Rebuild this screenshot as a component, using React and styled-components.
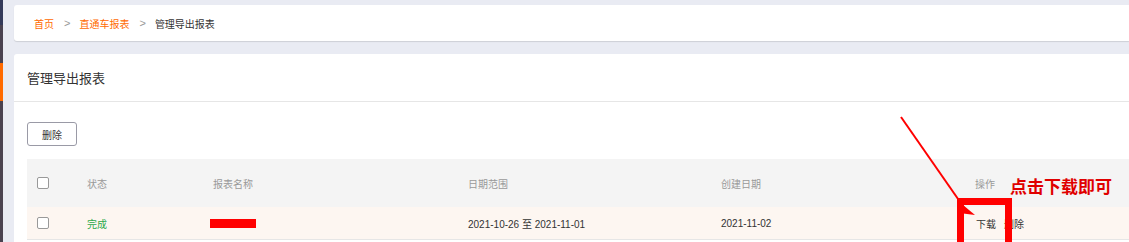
import React from 'react';
import styled, { createGlobalStyle } from 'styled-components';

const GlobalStyle = createGlobalStyle`
  html, body {
    margin: 0;
    padding: 0;
    background: #e9ebf3;
    font-family: "Liberation Sans", "Noto Sans CJK SC", sans-serif;
    overflow: hidden;
  }
`;

const rows = [
  { status: '完成', range: '2021-10-26 至 2021-11-01', created: '2021-11-02' },
];

const App = () => (
  <>
    <GlobalStyle />
    <Page>
      <SideStrip>
        <SideTop />
        <SideActive />
      </SideStrip>
      <Content>
        <Breadcrumb>
          <Crumb $link>首页</Crumb>
          <Sep>&gt;</Sep>
          <Crumb $link>直通车报表</Crumb>
          <Sep>&gt;</Sep>
          <Crumb>管理导出报表</Crumb>
        </Breadcrumb>
        <Card>
          <CardTitle>管理导出报表</CardTitle>
          <CardBody>
            <GhostButton>删除</GhostButton>
            <Table>
              <HeadRow>
                <Cell $first><Check /></Cell>
                <Cell>状态</Cell>
                <Cell>报表名称</Cell>
                <Cell>日期范围</Cell>
                <Cell>创建日期</Cell>
                <Cell>操作</Cell>
              </HeadRow>
              {rows.map((r) => (
                <BodyRow key={r.created}>
                  <Cell $first><Check /></Cell>
                  <Cell><Done>{r.status}</Done></Cell>
                  <Cell><Redacted /></Cell>
                  <Cell>{r.range}</Cell>
                  <Cell>{r.created}</Cell>
                  <Cell>
                    <Action>下载</Action>
                    <Action>删除</Action>
                  </Cell>
                </BodyRow>
              ))}
            </Table>
          </CardBody>
        </Card>
      </Content>
      <Arrow width="90" height="110" viewBox="0 0 90 110">
        <line x1="2" y1="2" x2="66" y2="94" stroke="#ff0000" strokeWidth="2" />
        <polygon points="76,100 64,90 60,98" fill="#ff0000" />
      </Arrow>
      <HighlightBox />
      <Note>点击下载即可</Note>
    </Page>
  </>
);

export default App;

const Page = styled.div`
  position: relative;
  display: flex;
  width: 1129px;
  height: 242px;
  overflow: hidden;
`;

const SideStrip = styled.div`
  width: 3px;
  flex-shrink: 0;
  background: #4a4250;
  display: flex;
  flex-direction: column;
`;

const SideTop = styled.div`
  height: 25px;
  background: #343a5a;
`;

const SideActive = styled.div`
  margin-top: 38px;
  height: 38px;
  background: #ff6a00;
`;

const Content = styled.div`
  flex: 1;
  padding: 5px 0 0 11px;
  display: flex;
  flex-direction: column;
  gap: 13px;
`;

const Breadcrumb = styled.div`
  height: 36px;
  background: #fff;
  border-radius: 3px 0 0 3px;
  box-shadow: 0 1px 1px rgba(0, 0, 0, 0.12);
  display: flex;
  align-items: center;
  padding-left: 20px;
  font-size: 10px;
`;

const Crumb = styled.span`
  color: ${(p) => (p.$link ? '#ff6a00' : '#333')};
`;

const Sep = styled.span`
  color: #999;
  margin: 0 9px 0 10px;
  font-size: 11px;
`;

const Card = styled.div`
  background: #fff;
  border-radius: 3px 0 0 0;
  flex: 1;
`;

const CardTitle = styled.div`
  height: 47px;
  border-bottom: 1px solid #e6e6e6;
  display: flex;
  align-items: center;
  padding-left: 13px;
  font-size: 13px;
  color: #333;
`;

const CardBody = styled.div`
  padding: 20px 0 0 13px;
`;

const GhostButton = styled.button`
  width: 50px;
  height: 24px;
  border: 1px solid #9a9aa6;
  border-radius: 3px;
  background: #fff;
  color: #333;
  font-family: inherit;
  font-size: 10px;
  padding: 0;
`;

const Table = styled.div`
  margin-top: 13px;
`;

const Grid = styled.div`
  display: grid;
  grid-template-columns: 60px 126px 255px 253px 254px 1fr;
  align-items: center;
  font-size: 10px;
`;

const HeadRow = styled(Grid)`
  height: 48px;
  background: #f4f4f4;
  color: #999;
`;

const BodyRow = styled(Grid)`
  height: 32px;
  background: #fdf6f1;
  border-bottom: 1px solid #e6e6e6;
  color: #333;
`;

const Cell = styled.div`
  display: flex;
  align-items: center;
  gap: 7px;
  padding-left: ${(p) => (p.$first ? '10px' : '0')};
`;

const Check = styled.span`
  width: 10px;
  height: 10px;
  border: 1px solid #999;
  border-radius: 2px;
  background: #fff;
`;

const Done = styled.span`
  color: #2ea84a;
`;

const Redacted = styled.span`
  display: block;
  width: 46px;
  height: 9px;
  margin-left: -3px;
  background: #ff0000;
`;

const Action = styled.span`
  color: #333;
  margin-left: 1px;
`;

const Arrow = styled.svg`
  position: absolute;
  left: 899px;
  top: 115px;
`;

const HighlightBox = styled.div`
  position: absolute;
  left: 957px;
  top: 198px;
  width: 41px;
  height: 44px;
  border: 7px solid #ff0000;
  border-bottom: none;
`;

const Note = styled.div`
  position: absolute;
  left: 1010px;
  top: 173px;
  color: #e00000;
  font-size: 17px;
  font-weight: 700;
  font-family: "Noto Sans CJK SC", serif;
`;
